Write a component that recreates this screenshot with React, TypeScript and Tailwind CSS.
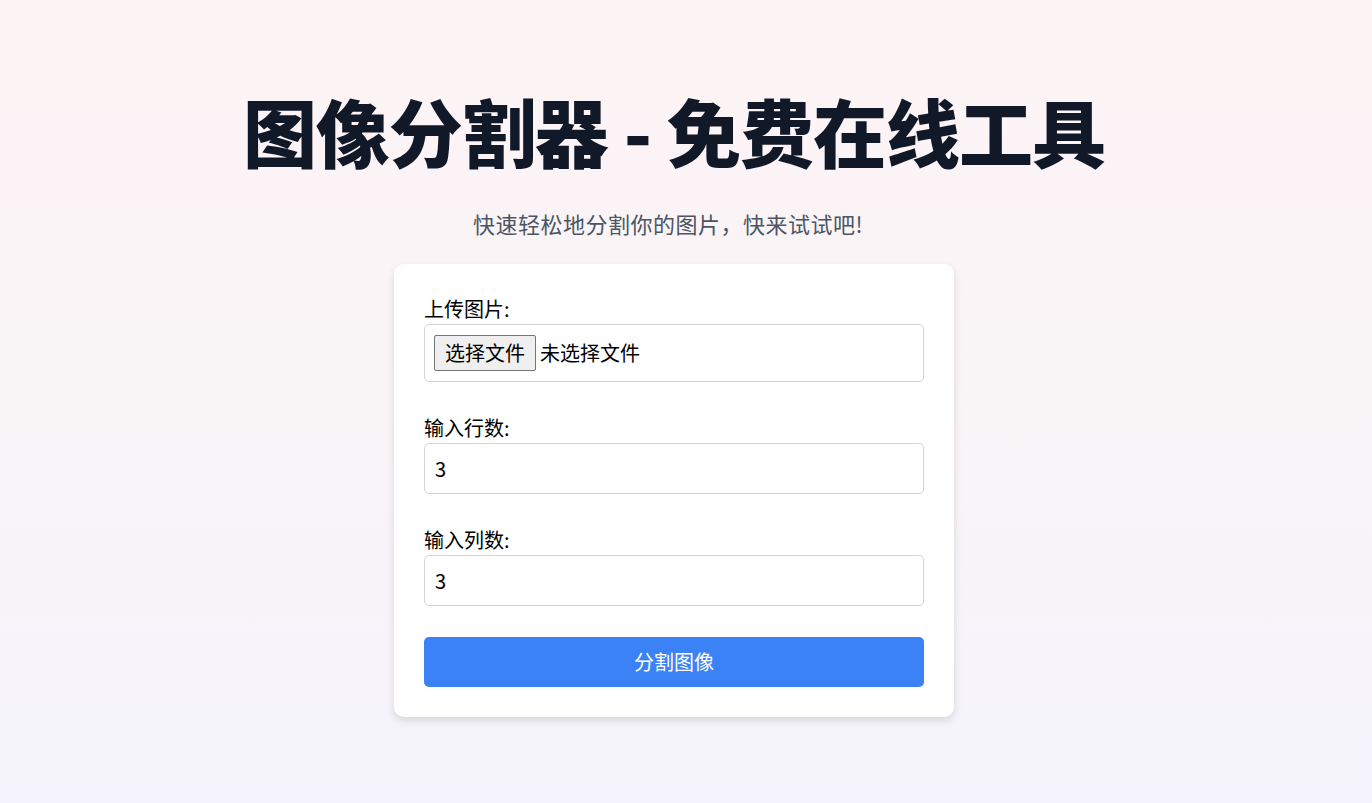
import React from "react";

export default function App() {
  const font = { fontFamily: '"Noto Sans CJK SC", "Noto Sans", sans-serif' };
  return (
    <div
      style={font}
      className="min-h-screen w-full bg-gradient-to-b from-[#fdf3f5] via-[#f9f5f7] to-[#f5f4fc] flex flex-col items-center pt-[93px] pr-[24px]"
    >
      <h1 className="text-[74px] leading-none font-black text-[#111827] tracking-[-1px]">
        图像分割器 - 免费在线工具
      </h1>
      <p className="mt-[41px] pr-[12px] text-[22px] leading-[31px] text-[#4b5563] tracking-[0.5px]">
        快速轻松地分割你的图片，快来试试吧!
      </p>
      <div className="mt-[25px] w-[560px] bg-white rounded-[10px] shadow-[0_4px_8px_rgba(0,0,0,0.12)] p-[30px] flex flex-col">
        <label className="text-[20px] leading-[30px] text-black">上传图片:</label>
        <div className="h-[58px] border border-[#d1d5db] rounded-[5px] flex items-center px-[9px]">
          <span className="h-[36px] px-[10px] flex items-center bg-[#efefef] border border-[#767676] rounded-[2px] text-[20px] text-black">
            选择文件
          </span>
          <span className="ml-[4px] text-[20px] text-black">未选择文件</span>
        </div>

        <label className="mt-[31px] text-[20px] leading-[30px] text-black">输入行数:</label>
        <input
          type="number"
          defaultValue={3}
          className="h-[51px] border border-[#d1d5db] rounded-[5px] px-[10px] text-[20px] text-black outline-none"
        />

        <label className="mt-[31px] text-[20px] leading-[30px] text-black">输入列数:</label>
        <input
          type="number"
          defaultValue={3}
          className="h-[51px] border border-[#d1d5db] rounded-[5px] px-[10px] text-[20px] text-black outline-none"
        />

        <button className="mt-[31px] h-[50px] bg-[#3b82f6] rounded-[5px] text-white text-[20px]">
          分割图像
        </button>
      </div>
    </div>
  );
}
